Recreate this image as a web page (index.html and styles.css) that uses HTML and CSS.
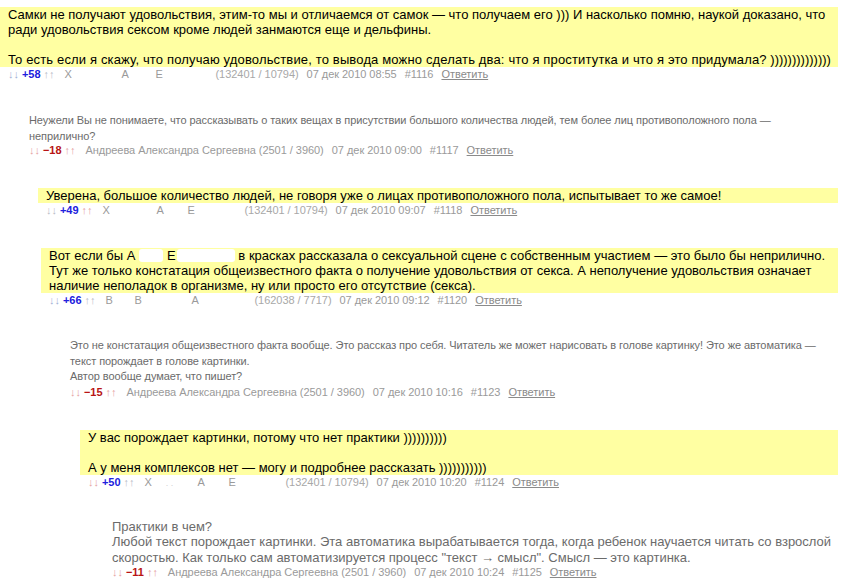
FILE: index.html
```html
<!DOCTYPE html>
<html lang="ru">
<head>
<meta charset="utf-8">
<title>Комментарии</title>
<link rel="stylesheet" href="styles.css">
</head>
<body>
<div class="thread">

  <div class="comment hl lv0">
    <div class="body">Самки не получают удовольствия, этим-то мы и отличаемся от самок — что получаем его ))) И насколько помню, наукой доказано, что<br>ради удовольствия сексом кроме людей занмаются еще и дельфины.<br><br><span class="wide">То есть если я скажу, что получаю удовольствие, то вывода можно сделать два: что я проститутка и что я это придумала?</span> ))))))))))))))</div>
    <div class="meta">
      <span class="vote"><span class="arr tb">↓↓</span> <b class="score pos">+58</b> <span class="arr tg">↑↑</span></span>
      <span class="author"><span class="ini w57">Х</span><span class="ini w34">А</span><span class="ini w60">Е</span><span class="stat">(132401 / 10794)</span></span>
      <span class="date">07 дек 2010 08:55</span>
      <span class="num">#1116</span>
      <a class="reply" href="#">Ответить</a>
    </div>
  </div>

  <div class="comment gray small lv1">
    <div class="body">Неужели Вы не понимаете, что рассказывать о таких вещах в присутствии большого количества людей, тем более лиц противоположного пола —<br>неприлично?</div>
    <div class="meta">
      <span class="vote"><span class="arr tr">↓↓</span> <b class="score neg">−18</b> <span class="arr tr">↑↑</span></span>
      <span class="author">Андреева Александра Сергеевна (2501 / 3960)</span>
      <span class="date">07 дек 2010 09:00</span>
      <span class="num">#1117</span>
      <a class="reply" href="#">Ответить</a>
    </div>
  </div>

  <div class="comment hl lv2">
    <div class="body">Уверена, большое количество людей, не говоря уже о лицах противоположного пола, испытывает то же самое!</div>
    <div class="meta">
      <span class="vote"><span class="arr tg">↓↓</span> <b class="score pos">+49</b> <span class="arr tr">↑↑</span></span>
      <span class="author"><span class="ini w54">Х</span><span class="ini w31">А</span><span class="ini w57">Е</span><span class="stat">(132401 / 10794)</span></span>
      <span class="date">07 дек 2010 09:07</span>
      <span class="num">#1118</span>
      <a class="reply" href="#">Ответить</a>
    </div>
  </div>

  <div class="comment hl lv3">
    <div class="body">Вот если бы А<span class="blot b1"></span> Е<span class="blot b2"></span> в красках рассказала о сексуальной сцене с собственным участием — это было бы неприлично.<br>Тут же только констатация общеизвестного факта о получение удовольствия от секса. А неполучение удовольствия означает<br>наличие неполадок в организме, ну или просто его отсутствие (секса).</div>
    <div class="meta">
      <span class="vote"><span class="arr tb">↓↓</span> <b class="score pos">+66</b> <span class="arr tg">↑↑</span></span>
      <span class="author"><span class="ini w29">В</span><span class="ini w57">В</span><span class="ini w63">А</span><span class="stat">(162038 / 7717)</span></span>
      <span class="date">07 дек 2010 09:12</span>
      <span class="num">#1120</span>
      <a class="reply" href="#">Ответить</a>
    </div>
  </div>

  <div class="comment gray small lv4">
    <div class="body">Это не констатация общеизвестного факта вообще. Это рассказ про себя. Читатель же может нарисовать в голове картинку! Это же автоматика —<br>текст порождает в голове картинки.<br>Автор вообще думает, что пишет?</div>
    <div class="meta">
      <span class="vote"><span class="arr tr">↓↓</span> <b class="score neg">−15</b> <span class="arr tr">↑↑</span></span>
      <span class="author">Андреева Александра Сергеевна (2501 / 3960)</span>
      <span class="date">07 дек 2010 10:16</span>
      <span class="num">#1123</span>
      <a class="reply" href="#">Ответить</a>
    </div>
  </div>

  <div class="comment hl lv5 tight">
    <div class="body">У вас порождает картинки, потому что нет практики ))))))))))<br><br>А у меня комплексов нет — могу и подробнее рассказать )))))))))))</div>
    <div class="meta">
      <span class="vote"><span class="arr tr">↓↓</span> <b class="score pos">+50</b> <span class="arr tg">↑↑</span></span>
      <span class="author"><span class="ini w53">Х<span class="dots">. .</span></span><span class="ini w31">А</span><span class="ini w57">Е</span><span class="stat">(132401 / 10794)</span></span>
      <span class="date">07 дек 2010 10:20</span>
      <span class="num">#1124</span>
      <a class="reply" href="#">Ответить</a>
    </div>
  </div>

  <div class="comment gray lv6">
    <div class="body">Практики в чем?<br>Любой текст порождает картинки. Эта автоматика вырабатывается тогда, когда ребенок научается читать со взрослой<br>скоростью. Как только сам автоматизируется процесс "текст → смысл". Смысл — это картинка.</div>
    <div class="meta">
      <span class="vote"><span class="arr tr">↓↓</span> <b class="score neg">−11</b> <span class="arr tr">↑↑</span></span>
      <span class="author">Андреева Александра Сергеевна (2501 / 3960)</span>
      <span class="date">07 дек 2010 10:24</span>
      <span class="num">#1125</span>
      <a class="reply" href="#">Ответить</a>
    </div>
  </div>

</div>
</body>
</html>
```

FILE: styles.css
```css
html, body {
  margin: 0;
  padding: 0;
  background: #ffffff;
}

body {
  font-family: "Liberation Sans", Arial, "Noto Sans", sans-serif;
}

.thread {
  width: 838px;
  padding-top: 7px;
}

.comment {
  margin-bottom: 30px;
}

.comment.tight {
  margin-bottom: 28px;
}

.lv0 { margin-left: 0; }
.lv1 { margin-left: 21px; }
.lv2 { margin-left: 38px; }
.lv3 { margin-left: 41px; }
.lv4 { margin-left: 62px; }
.lv5 { margin-left: 80px; }
.lv6 { margin-left: 104px; }

.body {
  font-size: 13px;
  line-height: 15px;
  padding-left: 8px;
  white-space: nowrap;
}

.wide {
  letter-spacing: 0.15px;
}

.hl .body {
  background: #ffffa2;
  color: #000000;
}

.gray .body {
  color: #6b6b6b;
  line-height: 15.5px;
}

.small .body {
  font-size: 11px;
  letter-spacing: -0.07px;
}

.lv1 .body {
  padding-top: 1px;
  margin-bottom: -1px;
}

.blot {
  display: inline-block;
  height: 13px;
  background: #ffffff;
  vertical-align: -2px;
  border-radius: 3px;
}

.b1 { width: 24px; margin-left: 4px; }
.b2 { width: 58px; margin-left: 1px; }

.meta {
  display: flex;
  align-items: baseline;
  gap: 8px;
  padding-left: 8px;
  font-size: 11px;
  line-height: 15px;
  color: #9a9a9a;
  white-space: nowrap;
  letter-spacing: -0.04px;
}

.vote {
  margin-right: 2px;
}

.arr {
  color: #b8b8c4;
}

.arr.tb { color: #9fb0d4; }
.arr.tg { color: #b9bcc6; }
.arr.tr { color: #e6a3a3; }

.score {
  font-weight: bold;
}

.score.pos { color: #2020dd; }
.score.neg { color: #b81414; }

.author {
  color: #9a9a9a;
}

.ini {
  display: inline-block;
}

.w29 { width: 29px; }
.w31 { width: 31px; }
.w34 { width: 34px; }
.w53 { width: 53px; }
.w54 { width: 54px; }
.w57 { width: 57px; }
.w60 { width: 60px; }
.w63 { width: 63px; }

.dots {
  color: #d0d0d0;
  margin-left: 14px;
  font-size: 9px;
}

.stat {
  color: #a8a8a8;
}

.date, .num {
  color: #9a9a9a;
}

.reply {
  color: #8a8a8a;
  text-decoration: underline;
}
```
